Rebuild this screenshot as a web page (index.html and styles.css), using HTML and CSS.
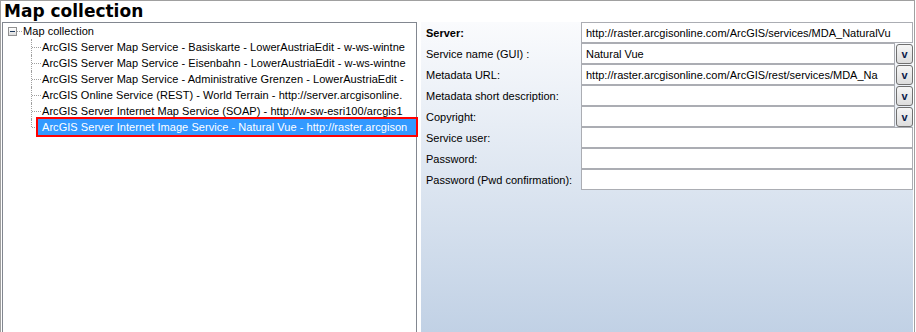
FILE: index.html
```html
<!DOCTYPE html>
<html lang="en">
<head>
    <meta charset="UTF-8">
    <title>Map collection</title>
    <link rel="stylesheet" href="styles.css">
</head>
<body>
    <div class="frame">
        <div class="frame-title">Map collection</div>
        <div class="frame-body">
            <!-- service tree -->
            <div class="tree">
                <div class="root-row">
                    <span class="expander"></span>
                    <span class="root-dots"></span>
                    <span class="root-label">Map collection</span>
                </div>
                <ul class="children">
                    <li><span class="node">ArcGIS Server Map Service - Basiskarte - LowerAustriaEdit - w-ws-wintne</span></li>
                    <li><span class="node">ArcGIS Server Map Service - Eisenbahn - LowerAustriaEdit - w-ws-wintne</span></li>
                    <li><span class="node">ArcGIS Server Map Service - Administrative Grenzen - LowerAustriaEdit -</span></li>
                    <li><span class="node">ArcGIS Online Service (REST) - World Terrain - http://server.arcgisonline.</span></li>
                    <li><span class="node">ArcGIS Server Internet Map Service (SOAP) - http://w-sw-esri100/arcgis1</span></li>
                    <li class="last"><span class="node selected">ArcGIS Server Internet Image Service - Natural Vue - http://raster.arcgison</span></li>
                </ul>
            </div>

            <!-- properties of the selected service -->
            <div class="editor">
                <div class="fields">
                    <label class="field-label bold">Server:</label>
                    <input class="text-box" type="text" value="http://raster.arcgisonline.com/ArcGIS/services/MDA_NaturalVu" readonly>

                    <label class="field-label">Service name (GUI) :</label>
                    <div class="combo">
                        <input class="text-box" type="text" value="Natural Vue" readonly>
                        <button class="drop">v</button>
                    </div>

                    <label class="field-label">Metadata URL:</label>
                    <div class="combo">
                        <input class="text-box" type="text" value="http://raster.arcgisonline.com/ArcGIS/rest/services/MDA_Na" readonly>
                        <button class="drop">v</button>
                    </div>

                    <label class="field-label">Metadata short description:</label>
                    <div class="combo">
                        <input class="text-box" type="text" value="" readonly>
                        <button class="drop">v</button>
                    </div>

                    <label class="field-label">Copyright:</label>
                    <div class="combo">
                        <input class="text-box" type="text" value="" readonly>
                        <button class="drop">v</button>
                    </div>

                    <label class="field-label">Service user:</label>
                    <input class="text-box" type="text" value="">

                    <label class="field-label">Password:</label>
                    <input class="text-box" type="password" value="">

                    <label class="field-label">Password (Pwd confirmation):</label>
                    <input class="text-box" type="password" value="">
                </div>
            </div>
        </div>
    </div>
</body>
</html>
```

FILE: styles.css
```css
body {
    margin: 0;
    background-color: white;
    font-family: "Liberation Sans", Arial, sans-serif;
    font-size: 11px;
    color: #000;
}
.frame {
    width: 913px;
    height: 331px;
    border: 1px solid #a0a0a0;
    border-bottom: none;
    overflow: hidden;
}
.frame-title {
    height: 21px;
    line-height: 21px;
    padding-left: 3px;
    font-family: "DejaVu Sans", sans-serif;
    font-weight: bold;
    font-size: 17px;
}
.frame-body {
    display: flex;
    height: 310px;
}

/* tree view */
.tree {
    margin-left: 1px;
    width: 413px;
    border: 1px solid #828790;
    border-bottom: none;
    background-color: white;
    letter-spacing: 0.05px;
}
.root-row {
    display: flex;
    align-items: center;
    height: 16px;
}
.expander {
    position: relative;
    width: 7px;
    height: 7px;
    margin-left: 5px;
    border: 1px solid #919191;
    background: linear-gradient(#ffffff, #dcdcdc);
}
.expander::after {
    content: "";
    position: absolute;
    left: 1px;
    top: 3px;
    width: 5px;
    height: 1px;
    background-color: #1e395b;
}
.root-dots {
    width: 5px;
    border-top: 1px dotted #a0a0a0;
}
.root-label {
    padding-left: 1px;
    line-height: 16px;
}
.children {
    list-style: none;
    margin: 0 0 0 28px;
    padding: 0;
}
.children li {
    position: relative;
    display: flex;
    height: 16px;
    padding-left: 7px;
}
.children li::before {
    content: "";
    position: absolute;
    left: 0;
    top: 0;
    height: 16px;
    border-left: 1px dotted #a0a0a0;
}
.children li.last::before {
    height: 8px;
}
.children li::after {
    content: "";
    position: absolute;
    left: 1px;
    top: 8px;
    width: 9px;
    border-top: 1px dotted #a0a0a0;
}
.node {
    position: relative;
    z-index: 1;
    flex: 1;
    padding-left: 4px;
    line-height: 16px;
    white-space: nowrap;
}
.node.selected {
    background-color: #3399ff;
    color: white;
    outline: 2px solid #ff0000;
}

/* property editor */
.editor {
    margin-left: 4px;
    width: 492px;
    background: linear-gradient(#fafbfd, #c1d1e5);
}
.fields {
    display: grid;
    grid-template-columns: 160px 1fr;
    grid-auto-rows: 21px;
}
.field-label {
    display: flex;
    align-items: center;
    padding-left: 5px;
    white-space: nowrap;
}
.bold {
    font-weight: bold;
}
.text-box {
    box-sizing: border-box;
    width: 100%;
    height: 21px;
    margin: 0;
    padding: 0 4px;
    border: 1px solid #abadb3;
    background-color: white;
    font-family: "Liberation Sans", Arial, sans-serif;
    font-size: 11px;
    color: #000;
    outline: none;
}
.combo {
    display: flex;
    align-items: center;
    gap: 1px;
}
.combo .text-box {
    flex: 1;
    min-width: 0;
}
.drop {
    box-sizing: border-box;
    width: 17px;
    height: 20px;
    margin-top: 1px;
    padding: 0;
    border: 1px solid #707070;
    border-radius: 3px;
    background: linear-gradient(#f6f6f6, #dddddd);
    font-family: "Liberation Sans", Arial, sans-serif;
    font-size: 11px;
    font-weight: bold;
    color: #0b1a4a;
}
```
